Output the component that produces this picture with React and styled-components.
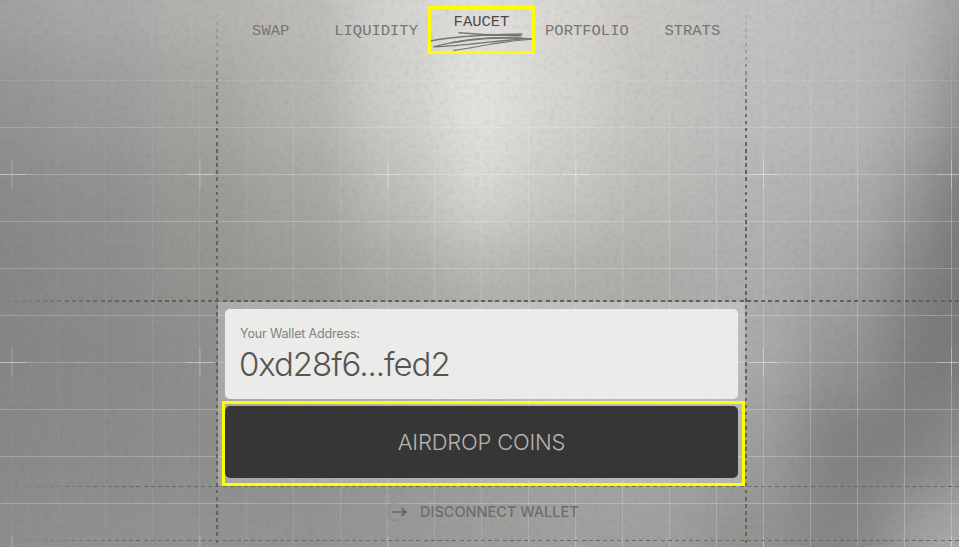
import React from "react";
import styled, { createGlobalStyle, css } from "styled-components";

const GlobalStyle = createGlobalStyle`
  * {
    box-sizing: border-box;
  }
  body {
    margin: 0;
    background: #9a9a99;
    font-family: Inter, "Liberation Sans", sans-serif;
    overflow: hidden;
  }
`;

/* light values of the wall, one row per height */
const shadeX = [0, 100, 200, 300, 400, 480, 560, 650, 750, 850, 925, 965];
const shadeY = [0, 100, 200, 270, 350, 440, 547];
const shades = [
  [162, 170, 180, 188, 212, 224, 215, 202, 194, 188, 178, 154],
  [148, 156, 166, 180, 207, 228, 213, 197, 190, 185, 172, 138],
  [138, 144, 154, 166, 190, 216, 200, 187, 180, 175, 150, 118],
  [134, 140, 149, 156, 169, 182, 177, 173, 173, 162, 132, 116],
  [134, 137, 142, 150, 161, 167, 170, 170, 171, 150, 122, 122],
  [136, 139, 141, 145, 151, 156, 162, 164, 158, 128, 128, 144],
  [142, 145, 147, 147, 152, 157, 160, 160, 147, 134, 162, 174],
];

const Page = styled.div`
  position: relative;
  width: 959px;
  height: 547px;
  overflow: hidden;
  display: grid;
  grid-template-columns: 216px 2px 527px 2px 1fr;
  grid-template-rows: 300px 2px 184px 1px 53px 1px 1fr;
`;

const Backdrop = styled.svg`
  position: absolute;
  inset: 0;
`;

const Header = styled.header`
  position: relative;
  grid-area: 1 / 3;
`;

const Nav = styled.nav`
  display: grid;
  grid-template-columns: repeat(5, 1fr);
  padding-top: 6px;
`;

const NavItem = styled.a`
  display: flex;
  flex-direction: column;
  align-items: center;
  height: 48px;
  padding-top: ${(props) => (props.$active ? "7px" : "16px")};
  color: ${(props) => (props.$active ? "#4b4a48" : "#77746f")};
  font-family: "Liberation Mono", monospace;
  font-size: 15.5px;
  line-height: 18px;
  position: relative;
`;

const Highlight = styled.span`
  position: absolute;
  border: 3px solid #ffff00;
  border-radius: 1px;
  pointer-events: none;
  ${(props) =>
    props.$tab
      ? css`
          inset: 0 -1px;
        `
      : css`
          inset: -5px -7px -8px -3px;
        `}
`;

const Scribble = styled.svg`
  display: block;
  flex: none;
  width: 104px;
  height: 22px;
  margin-top: 1px;
`;

const HRule = styled.div`
  position: relative;
  grid-column: 1 / -1;
  grid-row: ${(props) => props.$row};
  background: repeating-linear-gradient(
    90deg,
    #61605a 0 4px,
    transparent 4px 7.18px
  );
  opacity: ${(props) => (props.$thin ? 0.85 : 1)};
  mask-image: linear-gradient(90deg, rgba(0, 0, 0, 0.1), #000 14%);
`;

const VRule = styled.div`
  position: relative;
  grid-column: ${(props) => props.$col};
  grid-row: 1 / -1;
  background: repeating-linear-gradient(
    180deg,
    #66645f 0 3.6px,
    transparent 3.6px 7.1px
  );
  mask-image: linear-gradient(180deg, transparent 5px, #000 130px);
`;

const Panel = styled.main`
  position: relative;
  grid-area: 3 / 3;
  display: flex;
  flex-direction: column;
  gap: 7px;
  padding: 7px 7px 8px;
  background: rgba(255, 255, 255, 0.23);
`;

const WalletCard = styled.section`
  height: 90px;
  padding: 17px 15px 0;
  background: #ebebe9;
  border-radius: 5px;
`;

const WalletLabel = styled.div`
  color: #85827e;
  font-size: 12.5px;
  line-height: 16px;
  letter-spacing: -0.14px;
`;

const WalletAddress = styled.div`
  margin: 2px 0 0 -1px;
  color: #555553;
  font-size: 33px;
  font-weight: 330;
  line-height: 40px;
  letter-spacing: -1.05px;
`;

const AirdropButton = styled.button`
  position: relative;
  height: 72px;
  padding: 0;
  border: 0;
  border-radius: 5px;
  background: #363636;
  color: #b5b3ae;
  font-family: inherit;
  font-size: 22px;
  font-weight: 350;
  letter-spacing: -0.2px;
`;

const Disconnect = styled.button`
  position: relative;
  grid-area: 5 / 3;
  display: flex;
  align-items: center;
  gap: 10px;
  height: 49px;
  padding: 0 0 0 168px;
  border: 0;
  background: none;
  color: #6d6d6c;
  font-family: inherit;
  font-size: 14.5px;
  font-weight: 550;
  letter-spacing: 0;
  white-space: nowrap;
`;

const crossX = [12, 200, 388, 576, 763.5, 951.5];
const crossY = [174.5, 362.5, 550.5];
const lines = [...Array(21).keys()];

function Wall() {
  return (
    <Backdrop width="959" height="547" viewBox="0 0 959 547">
      <defs>
        <filter id="soft" filterUnits="userSpaceOnUse" x="-200" y="-200" width="1360" height="950" colorInterpolationFilters="sRGB">
          <feGaussianBlur stdDeviation="26 32" />
        </filter>
        <filter id="grain" x="0" y="0" width="100%" height="100%" colorInterpolationFilters="sRGB">
          <feTurbulence type="fractalNoise" baseFrequency="0.2" numOctaves="3" seed="8" />
          <feColorMatrix values="0 0 0 0 0.3  0 0 0 0 0.3  0 0 0 0 0.3  0.7 0 0 0 -0.32" />
        </filter>
        <linearGradient id="fadeRight" x1="0" x2="1" y1="0" y2="0">
          <stop offset="0" stopColor="#fff" stopOpacity="0.12" />
          <stop offset="0.35" stopColor="#fff" stopOpacity="0.5" />
          <stop offset="1" stopColor="#fff" stopOpacity="1" />
        </linearGradient>
        <linearGradient id="fadeTop" x1="0" x2="0" y1="0" y2="1">
          <stop offset="0" stopColor="#fff" stopOpacity="0" />
          <stop offset="0.06" stopColor="#fff" stopOpacity="0.15" />
          <stop offset="0.32" stopColor="#fff" stopOpacity="1" />
        </linearGradient>
        <mask id="maskV" maskUnits="userSpaceOnUse" x="0" y="0" width="959" height="547">
          <rect width="959" height="547" fill="url(#fadeRight)" />
        </mask>
        <mask id="maskTop" maskUnits="userSpaceOnUse" x="0" y="0" width="959" height="547">
          <rect width="959" height="547" fill="url(#fadeTop)" />
        </mask>
      </defs>
      <g filter="url(#soft)">
        {shades.map((row, j) =>
          row.map((v, i) => {
            const x0 = i === 0 ? -150 : (shadeX[i - 1] + shadeX[i]) / 2;
            const x1 = i === row.length - 1 ? 1110 : (shadeX[i + 1] + shadeX[i]) / 2;
            const y0 = j === 0 ? -150 : (shadeY[j - 1] + shadeY[j]) / 2;
            const y1 = j === shades.length - 1 ? 700 : (shadeY[j + 1] + shadeY[j]) / 2;
            const warm = j < 4 && i > 1 && i < 8 ? 4 : 1;
            return (
              <rect
                key={`${i}-${j}`}
                x={x0}
                y={y0}
                width={x1 - x0 + 1}
                height={y1 - y0 + 1}
                fill={`rgb(${v}, ${v - (warm > 1 ? 1 : 0)}, ${v - warm})`}
              />
            );
          })
        )}
      </g>
      <rect width="959" height="547" filter="url(#grain)" opacity="0.24" />
      <g mask="url(#maskTop)" stroke="#fff" strokeOpacity="0.24">
        <g mask="url(#maskV)">
          {lines.map((n) => (
            <line key={n} x1={11.5 + n * 47} x2={11.5 + n * 47} y1="0" y2="547" />
          ))}
        </g>
        {lines.slice(0, 11).map((n) => (
          <line key={n} x1="0" x2="959" y1={33.5 + n * 47} y2={33.5 + n * 47} />
        ))}
        {crossX.map((x) =>
          crossY.map((y) => (
            <path key={`${x}-${y}`} d={`M${x - 14} ${y}h28M${x} ${y - 14}v28`} strokeOpacity="0.28" />
          ))
        )}
      </g>
    </Backdrop>
  );
}

function App() {
  return (
    <>
      <GlobalStyle />
      <Page>
        <Wall />
        <VRule $col={2} />
        <VRule $col={4} />
        <HRule $row={2} />
        <HRule $row={4} $thin />
        <HRule $row={6} $thin />
        <Header>
          <Nav>
            <NavItem>SWAP</NavItem>
            <NavItem>LIQUIDITY</NavItem>
            <NavItem $active>
              FAUCET
              <Scribble viewBox="0 0 104 22" fill="none" stroke="#777674" strokeLinecap="round">
                <path d="M1.5 9C20 5 50 3 93 2" strokeWidth="1.5" />
                <path d="M30 .7C48 2.2 70 3.4 92 3.8M50 3.2L91 2.9" strokeWidth="1.4" />
                <path d="M5 14.6C27 9 58 3.6 102 7" strokeWidth="1.3" />
                <path d="M5 14.8C38 14 68 8 102 6.6" strokeWidth="1.4" />
                <path d="M24 10.4C46 5.5 76 4 102 7" strokeWidth="1.1" />
                <path d="M25 18.4C48 15.4 74 8.5 102 7.5" strokeWidth="1.2" />
              </Scribble>
              <Highlight $tab />
            </NavItem>
            <NavItem>PORTFOLIO</NavItem>
            <NavItem>STRATS</NavItem>
          </Nav>
        </Header>
        <Panel>
          <WalletCard>
            <WalletLabel>Your Wallet Address:</WalletLabel>
            <WalletAddress>0xd28f6...fed2</WalletAddress>
          </WalletCard>
          <AirdropButton>
            AIRDROP COINS
            <Highlight />
          </AirdropButton>
        </Panel>
        <Disconnect>
          <svg width="24" height="22" viewBox="0 0 24 22" fill="none" stroke="#666665">
            <path d="M12.5 3.5C8 .5 2.5 2 2 9C1.5 17 6 22 12.5 18.5" strokeOpacity="0.35" />
            <path d="M6 11H20M15.5 7.2L20 11L15.5 14.8" strokeWidth="1.7" />
          </svg>
          DISCONNECT WALLET
        </Disconnect>
      </Page>
    </>
  );
}

export default App;
